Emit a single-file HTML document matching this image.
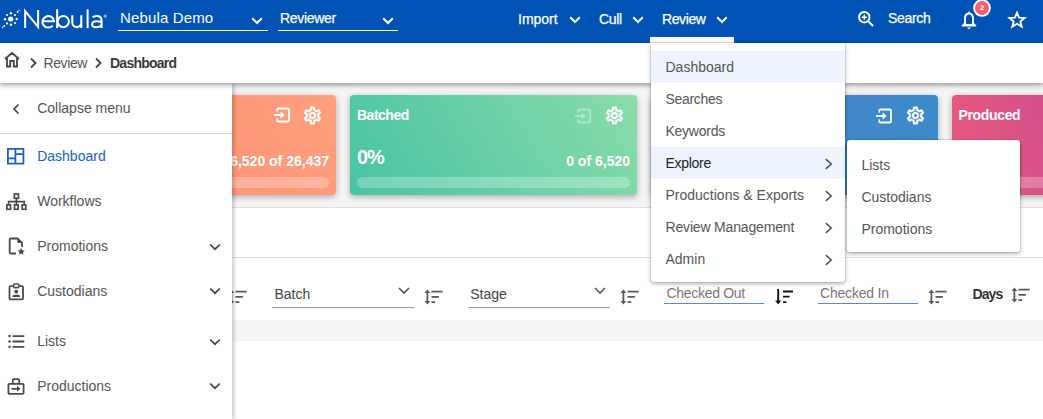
<!DOCTYPE html>
<html><head><meta charset="utf-8">
<style>
*{box-sizing:border-box;margin:0;padding:0}
html,body{width:1043px;height:419px;overflow:hidden;background:#fff}
body{position:relative;font-family:"Liberation Sans",sans-serif;font-size:14px;color:#555}
.a{position:absolute}
.t{position:absolute;line-height:1;white-space:nowrap}
svg{position:absolute;overflow:visible}
#hdr{left:0;top:0;width:1043px;height:43px;background:#0053b5}
#crumb{left:0;top:43px;width:1043px;height:40px;background:#fff;box-shadow:0 2px 5px rgba(0,0,0,.38);z-index:5}
#bg1{left:0;top:83px;width:1043px;height:125px;background:#f4f4f4;border-bottom:1px solid #dedede}
#band{left:0;top:208px;width:1043px;height:50px;background:#fff;border-bottom:1px solid #dedede}
#gband{left:0;top:320px;width:1043px;height:21px;background:#f5f5f5}
.card{position:absolute;top:95px;width:287px;height:100px;border-radius:4px;box-shadow:0 2px 6px rgba(0,0,0,.3);overflow:hidden}
.card .t{color:#fff;font-weight:700}
.bar{position:absolute;left:7px;right:7px;top:82px;height:11px;border-radius:6px;background:rgba(255,255,255,.25)}
#side{left:0;top:83px;width:232px;height:336px;background:#fff;box-shadow:2px 0 4px rgba(0,0,0,.22);z-index:4}
#menu{left:651px;top:43px;width:194px;height:239px;background:#fff;border-radius:0 0 3px 3px;box-shadow:0 0 0 1px rgba(0,0,0,.07),0 2px 4px rgba(0,0,0,.3);z-index:10}
#sub{left:847px;top:140px;width:173px;height:112px;background:#fff;border-radius:3px;box-shadow:0 0 0 1px rgba(0,0,0,.07),0 2px 4px rgba(0,0,0,.3);z-index:11}
.hl{position:absolute;left:0;width:194px;height:32px;background:#edf4fd}
.w{color:#fff}
.med{-webkit-text-stroke:0.25px #fff}
</style></head><body>

<!-- header -->
<div id="hdr" class="a">
  <!-- logo -->
  <svg width="24" height="24" style="left:0;top:7px" viewBox="0 0 24 24">
    <g fill="#fff">
      <circle cx="10.7" cy="12" r="2.6"/>
      <circle cx="10.9" cy="6.2" r="1.2"/><circle cx="10.9" cy="17.8" r="1.2"/>
      <circle cx="5" cy="12.2" r="1.2"/><circle cx="16.7" cy="12" r="1.2"/>
      <circle cx="7" cy="8" r="1.1"/><circle cx="15" cy="8" r="1.1"/>
      <circle cx="7" cy="16.4" r="1.1"/><circle cx="15" cy="16" r="1.1"/>
      <circle cx="17.5" cy="5" r="0.9"/><circle cx="19" cy="3.5" r="0.7"/>
      <circle cx="4.2" cy="19" r="0.9"/><circle cx="2.6" cy="20.5" r="0.8"/>
    </g>
  </svg>
  <svg width="110" height="32" style="left:0;top:0" viewBox="0 0 110 32" fill="none" stroke="#fff" stroke-width="2.05">
    <path d="M25.15 28.1 V11.2 L38.1 27 V9.9" stroke-linejoin="miter"/>
    <path d="M42.4 21.3 H54.1 A5.85 5.75 0 1 0 52.7 25.6"/>
    <path d="M57.15 9.3 V28.1"/>
    <ellipse cx="63.3" cy="21.6" rx="5.6" ry="5.6"/>
    <path d="M72.3 15.2 V22.6 A4.5 4.5 0 0 0 81.3 22.6 M81.3 15.2 V28.1"/>
    <path d="M87.6 9.3 V28.1"/>
    <path d="M92.6 17.2 C93.8 16.2 95.2 15.9 96.7 15.9 C99.6 15.9 101.6 17.6 101.6 20.6 V27.9 M101.6 22.4 C100.2 21.6 98.6 21.3 96.6 21.3 C93.7 21.3 92.1 22.6 92.1 24.5 C92.1 26.3 93.8 27.2 96.1 27.2 C98.9 27.2 101 25.9 101.6 24.3"/>
    <circle cx="105.2" cy="16.1" r="1.7" fill="#8fb3e6" stroke="none"/>
  </svg>

  <div class="t w" style="left:120px;top:10.2px;font-size:15px;letter-spacing:0.15px">Nebula Demo</div>
  <div class="a" style="left:118px;top:29.5px;width:150px;height:1.5px;background:#fff"></div>
  <svg width="12" height="8" style="left:251px;top:17px" viewBox="0 0 12 8"><path d="M1.2 1.2 L6 6 L10.8 1.2" stroke="#fff" stroke-width="2" fill="none"/></svg>

  <div class="t w med" style="left:280px;top:11px;font-size:14px;letter-spacing:-0.3px">Reviewer</div>
  <div class="a" style="left:278px;top:29.5px;width:120px;height:1.5px;background:#fff"></div>
  <svg width="12" height="8" style="left:382px;top:17px" viewBox="0 0 12 8"><path d="M1.2 1.2 L6 6 L10.8 1.2" stroke="#fff" stroke-width="2" fill="none"/></svg>

  <div class="t w med" style="left:518px;top:12.3px">Import</div>
  <svg width="12" height="8" style="left:569px;top:16px" viewBox="0 0 12 8"><path d="M1.2 1.2 L6 6 L10.8 1.2" stroke="#fff" stroke-width="2" fill="none"/></svg>
  <div class="t w med" style="left:599px;top:12.3px;letter-spacing:-0.3px">Cull</div>
  <svg width="12" height="8" style="left:632px;top:16px" viewBox="0 0 12 8"><path d="M1.2 1.2 L6 6 L10.8 1.2" stroke="#fff" stroke-width="2" fill="none"/></svg>
  <div class="t w med" style="left:662px;top:12.3px;letter-spacing:-0.4px">Review</div>
  <svg width="12" height="8" style="left:715.5px;top:16px" viewBox="0 0 12 8"><path d="M1.2 1.2 L6 6 L10.8 1.2" stroke="#fff" stroke-width="2" fill="none"/></svg>
  <div class="a" style="left:650px;top:37px;width:84px;height:6px;background:#fff"></div>

  <!-- search -->
  <svg width="18" height="18" style="left:857px;top:10px" viewBox="0 0 18 18">
    <circle cx="7.3" cy="7.2" r="5.2" stroke="#fff" stroke-width="2" fill="none"/>
    <path d="M11 11 L16 16" stroke="#fff" stroke-width="2.2"/>
    <path d="M7.3 4.6 V9.8 M4.7 7.2 H9.9" stroke="#fff" stroke-width="1.5"/>
  </svg>
  <div class="t w med" style="left:888px;top:11px;letter-spacing:-0.3px">Search</div>

  <!-- bell -->
  <svg width="18" height="20" style="left:960px;top:10px" viewBox="0 0 18 20">
    <path d="M9 1.5 C9.6 1.5 10 1.9 10 2.4 C12.6 3 14 5.2 14 8 V13 L16.3 15.5 V16.6 H1.7 V15.5 L4 13 V8 C4 5.2 5.4 3 8 2.4 C8 1.9 8.4 1.5 9 1.5 Z M6 14 H12 V8 C12 6 10.8 4.4 9 4.4 C7.2 4.4 6 6 6 8 Z" fill="#fff" fill-rule="evenodd"/>
    <path d="M7.3 17.6 H10.7 C10.7 18.5 10 19 9 19 C8 19 7.3 18.5 7.3 17.6Z" fill="#fff"/>
  </svg>
  <svg width="20" height="20" style="left:973px;top:-1.5px" viewBox="0 0 20 20">
    <circle cx="9" cy="9" r="8.8" fill="#fff"/>
    <circle cx="9" cy="9" r="7" fill="#f2606c"/>
    <text x="9" y="11.3" text-anchor="middle" font-family="Liberation Sans" font-weight="700" font-size="7.5" fill="#fff">2</text>
  </svg>

  <!-- star -->
  <svg width="20" height="20" style="left:1007px;top:10px" viewBox="0 0 20 20">
    <path d="M10 2.6 L12.1 7.7 L17.6 8 L13.3 11.5 L14.8 16.8 L10 13.8 L5.2 16.8 L6.7 11.5 L2.4 8 L7.9 7.7 Z" stroke="#fff" stroke-width="1.8" fill="none" stroke-linejoin="miter"/>
  </svg>
</div>

<!-- breadcrumb -->
<div id="crumb" class="a">
  <svg width="18" height="18" style="left:3px;top:8px" viewBox="0 0 18 18">
    <path d="M2 8 L9 2 L16 8 M4 6.5 V15.5 H7.2 V10 H10.8 V15.5 H14 V6.5" stroke="#444" stroke-width="1.8" fill="none" stroke-linejoin="miter"/>
  </svg>
  <svg width="10" height="12" style="left:29px;top:14px" viewBox="0 0 10 12"><path d="M2 1.5 L6.5 6 L2 10.5" stroke="#444" stroke-width="1.8" fill="none"/></svg>
  <div class="t" style="left:43.5px;top:13.2px;color:#555;letter-spacing:-0.4px">Review</div>
  <svg width="10" height="12" style="left:93.5px;top:14px" viewBox="0 0 10 12"><path d="M2 1.5 L6.5 6 L2 10.5" stroke="#444" stroke-width="1.8" fill="none"/></svg>
  <div class="t" style="left:110px;top:13.2px;color:#3a3a3a;font-weight:700;letter-spacing:-0.75px">Dashboard</div>
</div>

<!-- content background -->
<div id="bg1" class="a"></div>
<div id="band" class="a"></div>
<div id="gband" class="a"></div>

<!-- cards -->
<div class="card" style="left:49px;background:linear-gradient(60deg,#fd8a6d,#ffa07f)">
  <div class="t" style="right:7px;left:auto;top:59px;text-align:right">6,520 of 26,437</div>
  <div class="bar"></div>
</div>
<svg width="18" height="16" style="left:273px;top:107.2px" viewBox="0 0 18 16"><path d="M4.2 4.4 V2.8 Q4.2 1.5 5.5 1.5 H14.7 Q16 1.5 16 2.8 V13.2 Q16 14.5 14.7 14.5 H5.5 Q4.2 14.5 4.2 13.2 V11.6" stroke="#fff" stroke-width="1.8" fill="none"/><path d="M1 8 H9.5" stroke="#fff" stroke-width="1.9"/><path d="M7.6 4.3 L11.6 8 L7.6 11.7 Z" fill="#fff"/></svg>

<div class="card" style="left:350px;background:linear-gradient(60deg,#48c3a5,#8adca9)">
  <div class="t" style="left:7px;top:13px;letter-spacing:-0.5px">Batched</div>
  <div class="t" style="left:7px;top:52px;font-size:20px;letter-spacing:-1px">0%</div>
  <div class="t" style="right:7px;top:59px">0 of 6,520</div>
  <div class="bar"></div>
</div>

<div class="card" style="left:651px;background:linear-gradient(60deg,#4b7fc8,#3b8aca)"></div>
<div class="card" style="left:952px;background:linear-gradient(75deg,#eb5c7b 0%,#d6508b 33%,#c04c9a 100%)">
  <div class="t" style="left:6.5px;top:13px;letter-spacing:-0.35px">Produced</div>
  <div class="bar"></div>
</div>

<!-- gear & input icons -->
<svg width="21" height="21" style="left:302.25px;top:104.9px;z-index:3;opacity:1" viewBox="0 0 24 24"><path d="M19.43 12.98c.04-.32.07-.64.07-.98 0-.34-.03-.66-.07-.98l2.11-1.65c.19-.15.24-.42.12-.64l-2-3.46c-.09-.16-.26-.25-.44-.25-.06 0-.12.01-.17.03l-2.49 1c-.52-.4-1.08-.73-1.690-.98l-.38-2.65C14.46 2.18 14.25 2 14 2h-4c-.25 0-.46.18-.49.42l-.38 2.65c-.61.25-1.17.59-1.69.98l-2.490-1c-.06-.02-.12-.03-.18-.03-.17 0-.34.09-.43.25l-2 3.46c-.13.22-.07.49.12.64l2.11 1.65c-.04.32-.07.65-.07.98 0 .33.03.66.07.98l-2.11 1.65c-.19.15-.24.42-.12.64l2 3.46c.09.16.26.25.44.25.06 0 .12-.01.17-.03l2.49-1c.52.4 1.08.73 1.69.98l.38 2.65c.03.24.24.42.49.42h4c.25 0 .46-.18.49-.42l.38-2.65c.61-.25 1.17-.59 1.69-.98l2.49 1c.06.02.12.03.18.03.17 0 .34-.09.43-.25l2-3.46c.12-.22.07-.49-.12-.64l-2.11-1.65zm-1.98-1.71c.04.31.05.52.05.73 0 .21-.02.43-.05.73l-.14 1.13.89.7 1.08.84-.7 1.21-1.27-.51-1.04-.42-.9.68c-.43.32-.84.56-1.25.73l-1.06.43-.16 1.13-.2 1.35h-1.4l-.19-1.35-.16-1.13-1.06-.43c-.43-.18-.83-.41-1.23-.71l-.91-.7-1.06.43-1.27.51-.7-1.21 1.08-.84.89-.7-.14-1.13c-.03-.31-.05-.54-.05-.74s.02-.43.05-.73l.14-1.130-.89-.7-1.08-.84.7-1.21 1.27.51 1.04.42.9-.68c.43-.32.84-.56 1.25-.73l1.06-.43.16-1.13.2-1.35h1.39l.19 1.35.16 1.13 1.06.43c.43.18.83.41 1.23.71l.91.7 1.06-.43 1.27-.51.7 1.21-1.07.85-.89.7.14 1.13zM12 8c-2.21 0-4 1.79-4 4s1.79 4 4 4 4-1.79 4-4-1.790-4-4-4zm0 6c-1.1 0-2-.9-2-2s.9-2 2-2 2 .9 2 2-.9 2-2 2z" fill="#fff" stroke="#fff" stroke-width="0.5"/></svg>
<svg width="21" height="21" style="left:603.6px;top:104.8px;z-index:3;opacity:1" viewBox="0 0 24 24"><path d="M19.43 12.98c.04-.32.07-.64.07-.98 0-.34-.03-.66-.07-.98l2.11-1.65c.19-.15.24-.42.12-.64l-2-3.46c-.09-.16-.26-.25-.44-.25-.06 0-.12.01-.17.03l-2.49 1c-.52-.4-1.08-.73-1.690-.98l-.38-2.65C14.46 2.18 14.25 2 14 2h-4c-.25 0-.46.18-.49.42l-.38 2.65c-.61.25-1.17.59-1.69.98l-2.490-1c-.06-.02-.12-.03-.18-.03-.17 0-.34.09-.43.25l-2 3.46c-.13.22-.07.49.12.64l2.11 1.65c-.04.32-.07.65-.07.98 0 .33.03.66.07.98l-2.11 1.65c-.19.15-.24.42-.12.64l2 3.46c.09.16.26.25.44.25.06 0 .12-.01.17-.03l2.49-1c.52.4 1.08.73 1.69.98l.38 2.65c.03.24.24.42.49.42h4c.25 0 .46-.18.49-.42l.38-2.65c.61-.25 1.17-.59 1.69-.98l2.49 1c.06.02.12.03.18.03.17 0 .34-.09.43-.25l2-3.46c.12-.22.07-.49-.12-.64l-2.11-1.65zm-1.98-1.71c.04.31.05.52.05.73 0 .21-.02.43-.05.73l-.14 1.13.89.7 1.08.84-.7 1.21-1.27-.51-1.04-.42-.9.68c-.43.32-.84.56-1.25.73l-1.06.43-.16 1.13-.2 1.35h-1.4l-.19-1.35-.16-1.13-1.06-.43c-.43-.18-.83-.41-1.23-.71l-.91-.7-1.06.43-1.27.51-.7-1.21 1.08-.84.89-.7-.14-1.13c-.03-.31-.05-.54-.05-.74s.02-.43.05-.73l.14-1.130-.89-.7-1.08-.84.7-1.21 1.27.51 1.04.42.9-.68c.43-.32.84-.56 1.25-.73l1.06-.43.16-1.13.2-1.35h1.39l.19 1.35.16 1.13 1.06.43c.43.18.83.41 1.23.71l.91.7 1.06-.43 1.27-.51.7 1.21-1.07.85-.89.7.14 1.13zM12 8c-2.21 0-4 1.79-4 4s1.79 4 4 4 4-1.79 4-4-1.790-4-4-4zm0 6c-1.1 0-2-.9-2-2s.9-2 2-2 2 .9 2 2-.9 2-2 2z" fill="#fff" stroke="#fff" stroke-width="0.5"/></svg>
<svg width="21" height="21" style="left:904.9px;top:104.9px;z-index:3;opacity:1" viewBox="0 0 24 24"><path d="M19.43 12.98c.04-.32.07-.64.07-.98 0-.34-.03-.66-.07-.98l2.11-1.65c.19-.15.24-.42.12-.64l-2-3.46c-.09-.16-.26-.25-.44-.25-.06 0-.12.01-.17.03l-2.49 1c-.52-.4-1.08-.73-1.690-.98l-.38-2.65C14.46 2.18 14.25 2 14 2h-4c-.25 0-.46.18-.49.42l-.38 2.65c-.61.25-1.17.59-1.69.98l-2.490-1c-.06-.02-.12-.03-.18-.03-.17 0-.34.09-.43.25l-2 3.46c-.13.22-.07.49.12.64l2.11 1.65c-.04.32-.07.65-.07.98 0 .33.03.66.07.98l-2.11 1.65c-.19.15-.24.42-.12.64l2 3.46c.09.16.26.25.44.25.06 0 .12-.01.17-.03l2.49-1c.52.4 1.08.73 1.69.98l.38 2.65c.03.24.24.42.49.42h4c.25 0 .46-.18.49-.42l.38-2.65c.61-.25 1.17-.59 1.69-.98l2.49 1c.06.02.12.03.18.03.17 0 .34-.09.43-.25l2-3.46c.12-.22.07-.49-.12-.64l-2.11-1.65zm-1.98-1.71c.04.31.05.52.05.73 0 .21-.02.43-.05.73l-.14 1.13.89.7 1.08.84-.7 1.21-1.27-.51-1.04-.42-.9.68c-.43.32-.84.56-1.25.73l-1.06.43-.16 1.13-.2 1.35h-1.4l-.19-1.35-.16-1.13-1.06-.43c-.43-.18-.83-.41-1.23-.71l-.91-.7-1.06.43-1.27.51-.7-1.21 1.08-.84.89-.7-.14-1.13c-.03-.31-.05-.54-.05-.74s.02-.43.05-.73l.14-1.130-.89-.7-1.08-.84.7-1.21 1.27.51 1.04.42.9-.68c.43-.32.84-.56 1.25-.73l1.06-.43.16-1.13.2-1.35h1.39l.19 1.35.16 1.13 1.06.43c.43.18.83.41 1.23.71l.91.7 1.06-.43 1.27-.51.7 1.21-1.07.85-.89.7.14 1.13zM12 8c-2.21 0-4 1.79-4 4s1.79 4 4 4 4-1.79 4-4-1.790-4-4-4zm0 6c-1.1 0-2-.9-2-2s.9-2 2-2 2 .9 2 2-.9 2-2 2z" fill="#fff" stroke="#fff" stroke-width="0.5"/></svg>
<svg width="18" height="16" style="left:574px;top:107.6px;z-index:3;opacity:0.35" viewBox="0 0 18 16"><path d="M4.2 4.4 V2.8 Q4.2 1.5 5.5 1.5 H14.7 Q16 1.5 16 2.8 V13.2 Q16 14.5 14.7 14.5 H5.5 Q4.2 14.5 4.2 13.2 V11.6" stroke="#fff" stroke-width="1.8" fill="none"/><path d="M1 8 H9.5" stroke="#fff" stroke-width="1.9"/><path d="M7.6 4.3 L11.6 8 L7.6 11.7 Z" fill="#fff"/></svg>
<svg width="18" height="16" style="left:874.5px;top:107.6px;z-index:3;opacity:1" viewBox="0 0 18 16"><path d="M4.2 4.4 V2.8 Q4.2 1.5 5.5 1.5 H14.7 Q16 1.5 16 2.8 V13.2 Q16 14.5 14.7 14.5 H5.5 Q4.2 14.5 4.2 13.2 V11.6" stroke="#fff" stroke-width="1.8" fill="none"/><path d="M1 8 H9.5" stroke="#fff" stroke-width="1.9"/><path d="M7.6 4.3 L11.6 8 L7.6 11.7 Z" fill="#fff"/></svg>


<!-- filter row -->
<div class="t" style="left:274.5px;top:287px;color:#444">Batch</div>
<div class="a" style="left:272px;top:307px;width:142px;height:1px;background:#9e9e9e"></div>
<svg width="12" height="8" style="left:397.5px;top:287px" viewBox="0 0 12 8"><path d="M1 1 L6 6 L11 1" stroke="#555" stroke-width="1.6" fill="none"/></svg>
<div class="t" style="left:470.2px;top:287px;color:#444">Stage</div>
<div class="a" style="left:468px;top:307px;width:142px;height:1px;background:#9e9e9e"></div>
<svg width="12" height="8" style="left:593.5px;top:287px" viewBox="0 0 12 8"><path d="M1 1 L6 6 L11 1" stroke="#555" stroke-width="1.6" fill="none"/></svg>
<div class="t" style="left:666.5px;top:286.2px;color:#777;letter-spacing:-0.3px">Checked Out</div>
<div class="a" style="left:664px;top:303px;width:100px;height:1.2px;background:#4a90e2"></div>
<div class="t" style="left:820px;top:286.2px;color:#777;letter-spacing:-0.2px">Checked In</div>
<div class="a" style="left:818px;top:303px;width:100px;height:1.2px;background:#4a90e2"></div>
<div class="t" style="left:972.5px;top:287.2px;color:#333;font-weight:700;letter-spacing:-0.9px">Days</div>

<svg width="20" height="16" style="left:228px;top:288.5px" viewBox="0 0 20 16"><path d="M3.4 2 V14" stroke="#5a5a5a" stroke-width="1.8"/><path d="M0.5 4 L3.4 0.6 L6.3 4 Z M0.5 12 L3.4 15.4 L6.3 12 Z" fill="#5a5a5a"/><path d="M7.5 2.7 H18.6 M7.5 7.8 H14.9 M7.5 13.2 H11.2" stroke="#5a5a5a" stroke-width="1.7"/></svg>
<svg width="20" height="16" style="left:424px;top:288.5px" viewBox="0 0 20 16"><path d="M3.4 2 V14" stroke="#5a5a5a" stroke-width="1.8"/><path d="M0.5 4 L3.4 0.6 L6.3 4 Z M0.5 12 L3.4 15.4 L6.3 12 Z" fill="#5a5a5a"/><path d="M7.5 2.7 H18.6 M7.5 7.8 H14.9 M7.5 13.2 H11.2" stroke="#5a5a5a" stroke-width="1.7"/></svg>
<svg width="20" height="16" style="left:620px;top:288.5px" viewBox="0 0 20 16"><path d="M3.4 2 V14" stroke="#5a5a5a" stroke-width="1.8"/><path d="M0.5 4 L3.4 0.6 L6.3 4 Z M0.5 12 L3.4 15.4 L6.3 12 Z" fill="#5a5a5a"/><path d="M7.5 2.7 H18.6 M7.5 7.8 H14.9 M7.5 13.2 H11.2" stroke="#5a5a5a" stroke-width="1.7"/></svg>
<svg width="20" height="16" style="left:774.5px;top:288.6px" viewBox="0 0 20 16"><path d="M3.2 0 V13" stroke="#111" stroke-width="1.9"/><path d="M0.1 11.4 L3.2 15.6 L6.3 11.4 Z" fill="#111"/><path d="M8 2.5 H18 M8 7.6 H14.6 M8 13.2 H11.4" stroke="#111" stroke-width="1.8"/></svg>
<svg width="20" height="16" style="left:928.4px;top:288.8px" viewBox="0 0 20 16"><path d="M3.4 2 V14" stroke="#5a5a5a" stroke-width="1.8"/><path d="M0.5 4 L3.4 0.6 L6.3 4 Z M0.5 12 L3.4 15.4 L6.3 12 Z" fill="#5a5a5a"/><path d="M7.5 2.7 H18.6 M7.5 7.8 H14.9 M7.5 13.2 H11.2" stroke="#5a5a5a" stroke-width="1.7"/></svg>
<svg width="20" height="16" style="left:1010.5px;top:286.6px" viewBox="0 0 20 16"><path d="M3.4 2 V14" stroke="#5a5a5a" stroke-width="1.8"/><path d="M0.5 4 L3.4 0.6 L6.3 4 Z M0.5 12 L3.4 15.4 L6.3 12 Z" fill="#5a5a5a"/><path d="M7.5 2.7 H18.6 M7.5 7.8 H14.9 M7.5 13.2 H11.2" stroke="#5a5a5a" stroke-width="1.7"/></svg>


<!-- side menu -->
<div id="side" class="a">
  <svg width="10" height="12" style="left:11px;top:20px" viewBox="0 0 10 12"><path d="M7.5 1.5 L3 6 L7.5 10.5" stroke="#444" stroke-width="1.7" fill="none"/></svg>
  <div class="t" style="left:37.2px;top:18px">Collapse menu</div>
  <div class="a" style="left:0;top:50px;width:232px;height:1px;background:#dcdcdc"></div>
  <div class="t" style="left:37.2px;top:66.45px;color:#1a62c0">Dashboard</div>
<div class="t" style="left:37.2px;top:110.85px;color:#555">Workflows</div>
<div class="t" style="left:37.2px;top:155.65px;color:#555">Promotions</div>
<div class="t" style="left:37.2px;top:200.55px;color:#555">Custodians</div>
<div class="t" style="left:37.2px;top:250.65px;color:#555">Lists</div>
<div class="t" style="left:37.2px;top:295.55px;color:#555">Productions</div>
<svg width="12" height="8" style="left:209px;top:159.5px" viewBox="0 0 12 8"><path d="M1.2 1.5 L6 6.2 L10.8 1.5" stroke="#444" stroke-width="1.7" fill="none"/></svg>
<svg width="12" height="8" style="left:209px;top:204.39999999999998px" viewBox="0 0 12 8"><path d="M1.2 1.5 L6 6.2 L10.8 1.5" stroke="#444" stroke-width="1.7" fill="none"/></svg>
<svg width="12" height="8" style="left:209px;top:254.5px" viewBox="0 0 12 8"><path d="M1.2 1.5 L6 6.2 L10.8 1.5" stroke="#444" stroke-width="1.7" fill="none"/></svg>
<svg width="12" height="8" style="left:209px;top:299.4px" viewBox="0 0 12 8"><path d="M1.2 1.5 L6 6.2 L10.8 1.5" stroke="#444" stroke-width="1.7" fill="none"/></svg>
<svg width="19" height="18" style="left:6.3px;top:64.1px" viewBox="0 0 19 18"><path d="M1.9 1.9 H17.4 V16.6 H1.9 Z M9.4 1.9 V16.6 M1.9 11.3 H9.4 M9.4 7.2 H17.4" stroke="#1a62c0" stroke-width="1.8" fill="none"/></svg>
<svg width="21" height="18" style="left:5.5px;top:109.5px" viewBox="0 0 21 18" fill="none" stroke="#4a4a4a" stroke-width="1.7"><rect x="8.3" y="1" width="4.2" height="4.2"/><path d="M10.4 5.2 V8.6 M2.6 11.8 V8.6 H18.2 V11.8 M10.4 8.6 V11.8"/><rect x="0.9" y="11.9" width="3.6" height="4.4"/><rect x="8.5" y="11.9" width="3.6" height="4.4"/><rect x="16.2" y="11.9" width="3.6" height="4.4"/></svg>
<svg width="18" height="19" style="left:7.5px;top:153.5px" viewBox="0 0 18 19"><path d="M14 10 V5.9 L9.6 1.5 H2.8 Q1.7 1.5 1.7 2.6 V15.4 Q1.7 16.5 2.8 16.5 H8" stroke="#4a4a4a" stroke-width="1.8" fill="none" stroke-linejoin="round"/><path d="M9.4 1.5 V6.1 H14 Z" fill="#4a4a4a"/><path d="M13.2 11 L14.3 13.3 L16.8 13.5 L14.9 15.2 L15.5 17.7 L13.2 16.4 L10.9 17.7 L11.5 15.2 L9.6 13.5 L12.1 13.3 Z" fill="#4a4a4a"/></svg>
<svg width="17" height="18" style="left:7.5px;top:199.8px" viewBox="0 0 17 18"><path d="M5.3 3.2 H2.6 Q1.5 3.2 1.5 4.3 V15.3 Q1.5 16.4 2.6 16.4 H13.9 Q15 16.4 15 15.3 V4.3 Q15 3.2 13.9 3.2 H11.2" stroke="#4a4a4a" stroke-width="1.8" fill="none"/><rect x="5.6" y="1" width="5.3" height="3.6" rx="1" fill="none" stroke="#4a4a4a" stroke-width="1.6"/><circle cx="8.25" cy="8.6" r="1.9" fill="#4a4a4a"/><path d="M4.5 13.9 V13 C4.5 11.3 12 11.3 12 13 V13.9 Z" fill="#4a4a4a"/></svg>
<svg width="17" height="15" style="left:7.5px;top:250px" viewBox="0 0 17 15"><circle cx="1.5" cy="3.1" r="1.25" fill="#4a4a4a"/><circle cx="1.5" cy="8.5" r="1.25" fill="#4a4a4a"/><circle cx="1.5" cy="13.8" r="1.25" fill="#4a4a4a"/><path d="M4.6 3.1 H16.3 M4.6 8.5 H16.3 M4.6 13.8 H16.3" stroke="#4a4a4a" stroke-width="1.8"/></svg>
<svg width="18" height="17" style="left:7px;top:295px" viewBox="0 0 18 17"><path d="M5.8 5.8 V2.3 Q5.8 1.2 6.9 1.2 H11.1 Q12.2 1.2 12.2 2.3 V5.8" stroke="#4a4a4a" stroke-width="1.7" fill="none"/><rect x="1.4" y="5.9" width="15.2" height="9.9" rx="1" stroke="#4a4a4a" stroke-width="1.8" fill="none"/><path d="M4.4 10.8 H11.6" stroke="#4a4a4a" stroke-width="1.7"/><path d="M10 7.8 L13.4 10.8 L10 13.8 Z" fill="#4a4a4a"/></svg>

</div>

<!-- dropdown menu -->
<div id="menu" class="a">
  <div class="hl" style="top:8px"></div>
  <div class="hl" style="top:104px"></div>
  <div class="t" style="left:14.5px;top:17.35px;color:#555">Dashboard</div>
<div class="t" style="left:14.5px;top:49.35px;letter-spacing:-0.3px;color:#555">Searches</div>
<div class="t" style="left:14.5px;top:81.35px;letter-spacing:-0.25px;color:#555">Keywords</div>
<div class="t" style="left:14.5px;top:113.35px;letter-spacing:-0.3px;color:#222">Explore</div>
<div class="t" style="left:14.5px;top:145.35px;color:#555">Productions &amp; Exports</div>
<div class="t" style="left:14.5px;top:177.35px;letter-spacing:-0.17px;color:#555">Review Management</div>
<div class="t" style="left:14.5px;top:209.35px;color:#555">Admin</div>
<svg width="9" height="12" style="left:172.5px;top:114.50px" viewBox="0 0 9 12"><path d="M1.8 1.2 L7.2 6 L1.8 10.8" stroke="#555" stroke-width="1.6" fill="none"/></svg>
<svg width="9" height="12" style="left:172.5px;top:146.50px" viewBox="0 0 9 12"><path d="M1.8 1.2 L7.2 6 L1.8 10.8" stroke="#555" stroke-width="1.6" fill="none"/></svg>
<svg width="9" height="12" style="left:172.5px;top:178.50px" viewBox="0 0 9 12"><path d="M1.8 1.2 L7.2 6 L1.8 10.8" stroke="#555" stroke-width="1.6" fill="none"/></svg>
<svg width="9" height="12" style="left:172.5px;top:210.50px" viewBox="0 0 9 12"><path d="M1.8 1.2 L7.2 6 L1.8 10.8" stroke="#555" stroke-width="1.6" fill="none"/></svg>

</div>

<div id="sub" class="a">
  <div class="t" style="left:14.4px;top:18.2px">Lists</div>
  <div class="t" style="left:14.4px;top:50.2px">Custodians</div>
  <div class="t" style="left:14.4px;top:82px">Promotions</div>
</div>

</body></html>
